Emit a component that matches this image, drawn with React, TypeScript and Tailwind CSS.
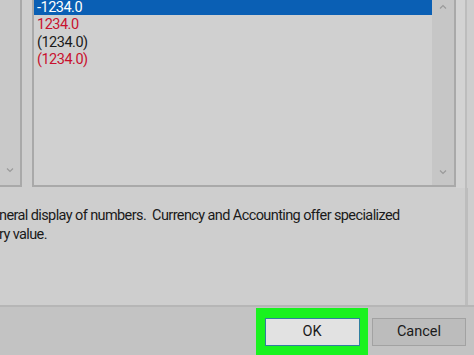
import React from "react";

export default function App() {
  const font = { fontFamily: 'Roboto, "Noto Sans", sans-serif' };
  return (
    <div className="w-[474px] h-[355px] overflow-hidden bg-[#cecece] flex flex-col" style={font}>
      <div className="h-[305px] flex flex-col">
        <div className="flex h-[188px]">
          {/* left list */}
          <div className="w-[22px] h-[187px] bg-[#c9c9c9] border-r-2 border-b-2 border-[#a9a9a9] flex flex-col justify-end items-center pb-[8px]">
            <svg width="8" height="6" viewBox="0 0 8 6" className="mb-[4px]">
              <path d="M1 1.5 L4 4.5 L7 1.5" fill="none" stroke="#9a9a9a" strokeWidth="1.2" />
            </svg>
          </div>
          <div className="w-[10px]" />
          {/* right list */}
          <div className="w-[424px] h-[187px] border-l-2 border-b-2 border-r-2 border-[#a9a9a9] bg-[#d0d0d0] flex">
            <div className="flex-1 flex flex-col text-[14.5px] leading-[17.5px] tracking-[-0.5px]">
              <div className="h-[15px] bg-[#0a5fb4] text-white pl-[3px] leading-[15px]">-1234.0</div>
              <div className="pl-[3px] text-[#c8102e] mt-[1px]">1234.0</div>
              <div className="pl-[3px] text-[#1a1a1a]">(1234.0)</div>
              <div className="pl-[3px] text-[#c8102e]">(1234.0)</div>
            </div>
            <div className="w-[22px] bg-[#c6c6c6] flex flex-col justify-between items-center py-[4px]">
              <svg width="8" height="6" viewBox="0 0 8 6">
                <path d="M1 4.5 L4 1.5 L7 4.5" fill="none" stroke="#9a9a9a" strokeWidth="1.2" />
              </svg>
              <svg width="8" height="6" viewBox="0 0 8 6" className="mb-[6px]">
                <path d="M1 1.5 L4 4.5 L7 1.5" fill="none" stroke="#9a9a9a" strokeWidth="1.2" />
              </svg>
            </div>
          </div>
          <div className="w-[9px] bg-[#d3d3d3]" />
          <div className="w-[2px] bg-[#bdbdbd] h-[305px]" />
        </div>
        <div className="flex-1 flex">
          <div className="flex-1 pt-[18px] text-[14.5px] leading-[19px] tracking-[-0.6px] text-[#1a1a1a] whitespace-nowrap">
            <div className="-ml-[1px]">neral display of numbers.&nbsp; Currency and Accounting offer specialized</div>
            <div className="-ml-[1px]">ry value.</div>
          </div>
          <div className="w-[2px] bg-[#bdbdbd]" />
          <div className="w-[6px]" />
        </div>
      </div>
      <div className="h-[2px] bg-[#b6b6b6]" />
      <div className="flex-1 bg-[#c3c3c3] flex items-start pl-[256px]">
        <div className="mt-[1px] bg-[#19f21f] w-[112px] h-[47px] flex items-start justify-center pt-[10px]">
          <div className="w-[95px] h-[28px] bg-[#e2e2e2] border border-[#2f7f9f] flex items-center justify-center text-[14.5px] text-[#1a1a1a]">
            OK
          </div>
        </div>
        <div className="ml-[4px] mt-[11px] w-[94px] h-[28px] bg-[#bcbcbc] border border-[#a2a2a2] flex items-center justify-center text-[14.5px] text-[#1a1a1a]">
          Cancel
        </div>
      </div>
    </div>
  );
}
